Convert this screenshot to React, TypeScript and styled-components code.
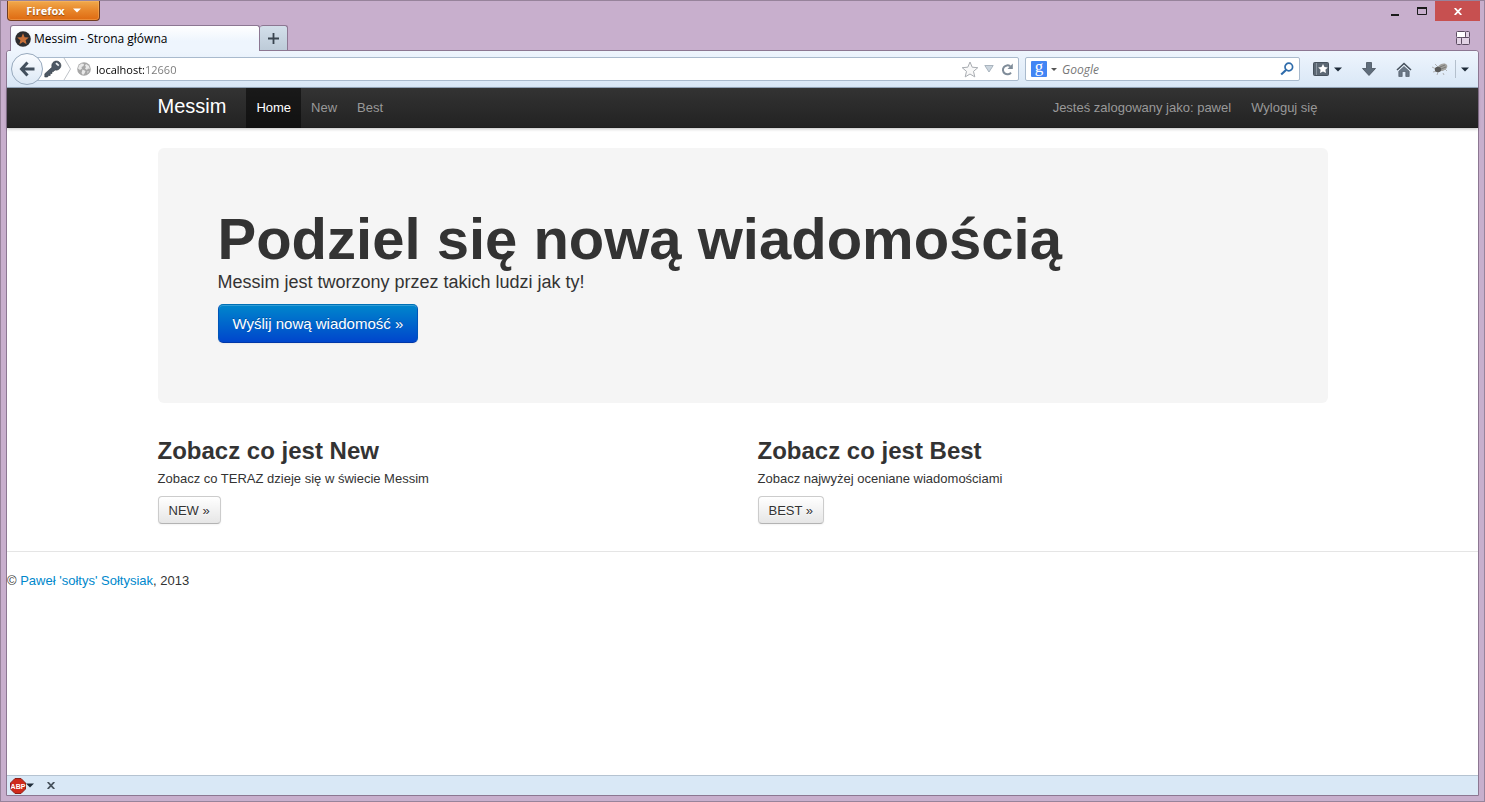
import React from "react";
import styled, { createGlobalStyle, css } from "styled-components";

const GlobalStyle = createGlobalStyle`
  *, *::before, *::after { box-sizing: border-box; }
  body { margin: 0; background: #c8afcd; }
  button, input { font: inherit; }
  button { cursor: pointer; }
`;

/* ---------- window frame ---------- */

const BrowserWindow = styled.div`
  display: flex;
  flex-direction: column;
  min-height: 100vh;
  padding: 0 5px 5px 6px;
  border: 1px solid #97839b;
  background: #c8afcd;
  font: 12px/16px "Open Sans", "Noto Sans", sans-serif;
  color: #000;
`;

const TitleBar = styled.div`
  display: flex;
  justify-content: space-between;
  align-items: flex-start;
  height: 24px;
`;

const PlainButton = styled.button<{ $w?: number }>`
  display: flex;
  align-items: center;
  justify-content: center;
  flex: none;
  width: ${(p) => (p.$w ? `${p.$w}px` : "auto")};
  padding: 0;
  border: 0;
  background: none;
  color: #1e2b38;
`;

const FirefoxButton = styled(PlainButton)`
  gap: 8px;
  width: 93px;
  height: 20px;
  border: 1px solid #6e3d22;
  border-top: 0;
  border-radius: 0 0 4px 4px;
  background: linear-gradient(#f0a94c, #e8862a 50%, #de6a12);
  box-shadow: inset 0 0 0 1px rgba(255, 190, 110, 0.4);
  color: #fff;
  font-size: 11px;
  font-weight: 700;
  text-shadow: 0 1px 1px rgba(90, 40, 0, 0.6);
`;

const WindowControls = styled.div`
  display: flex;
  margin-right: -1px;
`;

const WindowControl = styled(PlainButton)<{ $close?: boolean }>`
  height: 20px;
  ${(p) => p.$close && css`background: #c75050;`}
`;

const TabStrip = styled.div`
  display: flex;
  align-items: flex-end;
  height: 25px;
  padding: 0 7px 0 3px;
`;

const Tab = styled.div`
  position: relative;
  z-index: 1;
  display: flex;
  align-items: center;
  gap: 3px;
  width: 250px;
  height: 26px;
  margin-bottom: -1px;
  padding: 0 4px;
  border: 1px solid #8c7792;
  border-bottom: 0;
  border-radius: 3px 3px 0 0;
  background: linear-gradient(#fff, #eef5fd 60%);
`;

const NewTab = styled(PlainButton)`
  height: 25px;
  border: 1px solid #8c7792;
  border-left: 0;
  border-bottom: 0;
  border-radius: 3px 3px 0 0;
  background: linear-gradient(#d3dfea, #bdcbd8);
`;

const TabGroups = styled(PlainButton)`
  height: 24px;
  margin-left: auto;
`;

const Frame = styled.div`
  display: flex;
  flex: 1;
  flex-direction: column;
  margin-left: -1px;
  border: 1px solid #8c7792;
  border-radius: 3px 3px 0 0;
  background: #fff;
`;

/* ---------- navigation toolbar ---------- */

const Toolbar = styled.div`
  display: flex;
  align-items: center;
  height: 37px;
  padding: 0 4px;
  border-bottom: 1px solid #97a9bd;
  border-radius: 3px 3px 0 0;
  background: linear-gradient(#eef5fd, #d9e7f6);
`;

const BackButton = styled(PlainButton)`
  position: relative;
  z-index: 1;
  height: 32px;
  border: 1px solid #97a9bd;
  border-radius: 50%;
  background: linear-gradient(#fafcff, #dce8f5);
`;

const Field = styled.div`
  display: flex;
  align-items: center;
  height: 24px;
  border: 1px solid #a9bacd;
  border-radius: 2px;
  background: #fff;
`;

const AddressField = styled(Field)`
  flex: 1;
  margin-left: -16px;
  padding: 0 2px 0 15px;
`;

const SearchField = styled(Field)`
  width: 275px;
  margin: 0 10px 0 6px;
  padding: 0 3px 0 4px;
`;

const TextInput = styled.input`
  flex: 1;
  min-width: 0;
  height: 22px;
  padding: 0;
  border: 0;
  outline: 0;
  background: none;
`;

const AddressInput = styled(TextInput)`
  background: linear-gradient(90deg, #000 48px, #777 48px);
  background-clip: text;
  font-size: 11px;
  -webkit-text-fill-color: transparent;
`;

const SearchInput = styled(TextInput)`
  margin-left: 4px;
  &::placeholder {
    color: #777;
    font-style: italic;
    opacity: 1;
  }
`;

const ExtensionButton = styled(PlainButton)`
  padding-left: 10px;
`;

const Separator = styled.span`
  width: 1px;
  height: 18px;
  background: #b4c0cd;
`;

/* ---------- page ---------- */

const Page = styled.div`
  flex: 1;
  font: 13px/18px "Liberation Sans", Arial, sans-serif;
  color: #333;
`;

const Container = styled.div`
  width: 100%;
  max-width: 1170px;
  margin: 0 auto;
`;

const NavBar = styled.header`
  height: 40px;
  background: linear-gradient(#333, #222);
  box-shadow: 0 1px 3px rgba(0, 0, 0, 0.25), inset 0 -1px 0 rgba(0, 0, 0, 0.1);
`;

const NavInner = styled(Container)`
  display: flex;
`;

const Brand = styled.a`
  padding: 8px 20px 12px 0;
  font-size: 20px;
  line-height: 20px;
  color: #fff;
  text-decoration: none;
`;

const NavLinks = styled.nav<{ $right?: boolean }>`
  display: flex;
  ${(p) => p.$right && css`margin-left: auto;`}
`;

const NavLink = styled.a<{ $active?: boolean }>`
  height: 40px;
  padding: 10px 10px 11px;
  line-height: 19px;
  color: ${(p) => (p.$active ? "#fff" : "#999")};
  background: ${(p) => (p.$active ? "rgba(0, 0, 0, 0.5)" : "none")};
  text-decoration: none;
`;

const Hero = styled.section`
  margin: 20px 0 30px;
  padding: 60px;
  border-radius: 6px;
  background: #f5f5f5;
`;

const HeroTitle = styled.h1`
  margin: 0;
  font-size: 58px;
  line-height: 62px;
`;

const HeroText = styled.p`
  margin: 0 0 9px;
  font-size: 18px;
  line-height: 25px;
`;

const Button = styled.button<{ $primary?: boolean }>`
  display: block;
  padding: 5px 10px 3px;
  border: 1px solid #ccc;
  border-bottom-color: #b3b3b3;
  border-radius: 4px;
  background: linear-gradient(#fff, #e6e6e6);
  box-shadow: inset 0 1px 0 rgba(255, 255, 255, 0.2), 0 1px 2px rgba(0, 0, 0, 0.05);
  color: #333;
  line-height: 18px;
  text-shadow: 0 1px 1px rgba(255, 255, 255, 0.75);
  ${(p) =>
    p.$primary &&
    css`
      padding: 9px 14px;
      border-color: #0070b5 #0055b8 #0037a8;
      border-radius: 5px;
      background: linear-gradient(#08c, #04c) border-box;
      color: #fff;
      font-size: 15px;
      line-height: 19px;
      text-shadow: 0 -1px 0 rgba(0, 0, 0, 0.25);
    `}
`;

const Features = styled.div`
  display: grid;
  grid-template-columns: 1fr 1fr;
  gap: 30px;
`;

const FeatureTitle = styled.h2`
  margin: 0;
  font-size: 24px;
  line-height: 36px;
`;

const FeatureText = styled.p`
  margin: 0 0 7px;
  line-height: 20px;
`;

const Rule = styled.hr`
  margin: 27px 0 18px;
  border: 0;
  border-top: 1px solid #e5e5e5;
`;

const Footer = styled.footer`
  padding-bottom: 9px;
  line-height: 22px;
`;

const FooterLink = styled.a`
  color: #08c;
  text-decoration: none;
`;

const AddonBar = styled.div`
  display: flex;
  align-items: center;
  height: 20px;
  padding: 0 2px;
  border-top: 1px solid #b5c3d1;
  background: #d9e8f6;
`;

/* ---------- icons ---------- */

const Caret = ({ fill = "#1e2b38", size = 8 }: { fill?: string; size?: number }) => (
  <svg width={size} height="5" viewBox="0 0 8 5" aria-hidden="true">
    <path d="M0 .5h8L4 4.5z" fill={fill} />
  </svg>
);

const StarFavicon = () => (
  <svg width="16" height="16" viewBox="0 0 16 16" aria-hidden="true">
    <circle cx="8" cy="8" r="7.8" fill="#2d2d2f" />
    <path d="M8 2.3l1.6 3.9 4.2.3-3.2 2.7 1 4.1L8 11.1l-3.6 2.2 1-4.1-3.2-2.7 4.2-.3z" fill="#c8713a" />
  </svg>
);

const PlusIcon = () => (
  <svg width="11" height="11" viewBox="0 0 11 11" aria-hidden="true">
    <path d="M5.5 0v11M0 5.5h11" stroke="#39444f" strokeWidth="1.8" />
  </svg>
);

const GroupsIcon = () => (
  <svg width="14" height="14" viewBox="0 0 14 14" stroke="#5b4b60" aria-hidden="true">
    <rect x=".5" y=".5" width="9" height="6" rx="1" fill="#fff" />
    <rect x="9.5" y=".5" width="4" height="6" rx="1" fill="#e2d3e5" />
    <rect x=".5" y="6.5" width="5" height="7" rx="1" fill="#e2d3e5" />
    <rect x="5.5" y="6.5" width="8" height="7" rx="1" fill="#e2d3e5" />
  </svg>
);

const BackIcon = () => (
  <svg width="16" height="16" viewBox="0 0 16 16" fill="none" stroke="#424f5d" strokeWidth="3" aria-hidden="true">
    <path d="M8.5 1.5L2.5 8l6 6.5M3 8h12.5" />
  </svg>
);

const KeyIcon = () => (
  <svg width="18" height="18" viewBox="0 0 18 18" aria-hidden="true">
    <path
      d="M9 2.5C10.5.8 13.4.5 15.3 2c2 1.8 2.2 4.7.4 6.6-1.2 1.4-3 1.8-4.700 1.400L9.500 11.500H8v2H6.200v2H4.500L3.500 17H.8v-3.200L8 7.200C7.500 5.500 7.900 3.800 9 2.500z"
      fill="#4d5864"
      stroke="#343c45"
      strokeWidth=".6"
    />
    <path d="M12 3.200l2.800 2.500" stroke="#eef1f4" strokeWidth="1.8" />
  </svg>
);

const ChevronEdge = () => (
  <svg width="9" height="22" viewBox="0 0 9 22" fill="none" aria-hidden="true">
    <path d="M1 0l6.500 11L1 22" stroke="#bfc3c8" />
  </svg>
);

const GlobeIcon = () => (
  <svg width="14" height="14" viewBox="0 0 14 14" aria-hidden="true">
    <circle cx="7" cy="7" r="6.8" fill="#a6a6a6" />
    <path
      d="M2 3.500l2.500-2 2.500.500-.500 2-2 1 .500 1.500-2 1.500L1 6.500zM9 2l3 2 .800 3-1.800-.500-1 1.500-2-1.500L9 5 8 3.500zM5.500 7.500l3 1.500-1 2.500-1.500 1.500-1.500-2zM10.500 9l1.300.500-1.300 2z"
      fill="#e9e9e9"
    />
  </svg>
);

const StarIcon = () => (
  <svg width="18" height="17" viewBox="0 0 18 17" aria-hidden="true">
    <path
      d="M9 1l2.200 5.200 5.600.5-4.300 3.700 1.300 5.500L9 13l-4.800 2.900 1.300-5.500L1.200 6.700l5.600-.5z"
      fill="#f8f8f8"
      stroke="#a9adb2"
    />
  </svg>
);

const HistoryIcon = () => (
  <svg width="10" height="8" viewBox="0 0 10 8" aria-hidden="true">
    <path d="M.8.5h8.400L5 7z" fill="#cbd5de" stroke="#a9b4be" />
  </svg>
);

const ReloadIcon = () => (
  <svg width="13" height="13" viewBox="0 0 13 13" aria-hidden="true">
    <path d="M10 9.600A4.500 4.500 0 1 1 9.200 3.300" fill="none" stroke="#7f8c99" strokeWidth="2" />
    <path d="M11.800.5v5.500H6.500z" fill="#7f8c99" />
  </svg>
);

const GoogleIcon = () => (
  <svg width="16" height="16" viewBox="0 0 16 16" overflow="visible" aria-hidden="true">
    <rect width="16" height="16" rx="1" fill="#4285f4" />
    <text x="8" y="11" fill="#fff" fontSize="17" fontFamily="Liberation Serif, serif" textAnchor="middle">
      g
    </text>
  </svg>
);

const SearchIcon = () => (
  <svg width="14" height="14" viewBox="0 0 14 14" fill="none" stroke="#2f6cab" aria-hidden="true">
    <circle cx="8.8" cy="5" r="3.8" strokeWidth="1.7" />
    <path d="M6 8L1.200 12.500" strokeWidth="2.2" />
  </svg>
);

const BookmarkIcon = () => (
  <svg width="16" height="14" viewBox="0 0 16 14" aria-hidden="true">
    <rect x=".5" y=".5" width="15" height="13" rx="1" fill="#5c6874" stroke="#46515c" />
    <path d="M3.500 1v12" stroke="#8b96a1" />
    <path d="M10 2l1.500 3 3.300.4-2.400 2.300.6 3.300-3-1.600L7 11l.6-3.300L5.200 5.400 8.500 5z" fill="#fff" />
  </svg>
);

const DownloadIcon = () => (
  <svg width="14" height="14" viewBox="0 0 14 14" aria-hidden="true">
    <path d="M4.500.5h5v6h4L7 13.500.5 6.500h4z" fill="#5f6d7b" stroke="#46515c" strokeWidth=".8" />
  </svg>
);

const HomeIcon = () => (
  <svg width="16" height="15" viewBox="0 0 16 15" aria-hidden="true">
    <path d="M1 8l7-6.500L15 8" fill="none" stroke="#46515c" strokeWidth="1.6" />
    <path d="M2.800 9.200L8 4.500l5.200 4.700v5.300H9.800v-5H6.200v5H2.800z" fill="#6b7886" stroke="#46515c" strokeWidth=".6" />
  </svg>
);

const BugIcon = () => (
  <svg width="18" height="14" viewBox="0 0 18 14" aria-hidden="true">
    <path d="M1 5l4 2M2 10l4-1M6 13l1-3M4 2l3 3M12 11l1 2M14 7l2 2" stroke="#a3a3a3" strokeWidth=".8" />
    <ellipse cx="11.500" cy="5.200" rx="5" ry="3.500" transform="rotate(-22 11.500 5.200)" fill="#a3a29f" />
    <ellipse cx="7" cy="7.500" rx="3.200" ry="2.800" fill="#5a5a58" />
    <path d="M9 5l5-2M10 7l5-2" stroke="#6f6e6b" strokeWidth=".8" />
  </svg>
);

const AbpIcon = () => (
  <svg width="16" height="16" viewBox="0 0 16 16" aria-hidden="true">
    <path d="M5 .5h6L15.500 5v6L11 15.500H5L.5 11V5z" fill="#cf2a1c" stroke="#8d2018" />
    <text x="8" y="11" fill="#fff" fontSize="7" fontWeight="700" fontFamily="Liberation Sans, sans-serif" textAnchor="middle">
      ABP
    </text>
  </svg>
);

const MinimizeIcon = () => (
  <svg width="8" height="12" viewBox="0 0 8 12" aria-hidden="true">
    <path d="M0 10h8" stroke="#1b1b1b" strokeWidth="2" />
  </svg>
);

const MaximizeIcon = () => (
  <svg width="10" height="8" viewBox="0 0 10 8" aria-hidden="true">
    <path d="M.5 1v6.500h9V1" fill="none" stroke="#1b1b1b" />
    <path d="M0 1h10" stroke="#1b1b1b" strokeWidth="2" />
  </svg>
);

const CrossIcon = ({ color }: { color: string }) => (
  <svg width="8" height="7" viewBox="0 0 8 7" aria-hidden="true">
    <path d="M.7 0l6.600 7M7.300 0L.7 7" stroke={color} strokeWidth="1.8" />
  </svg>
);

/* ---------- composition ---------- */

const features = [
  { title: "Zobacz co jest New", text: "Zobacz co TERAZ dzieje się w świecie Messim", action: "NEW »" },
  { title: "Zobacz co jest Best", text: "Zobacz najwyżej oceniane wiadomościami", action: "BEST »" },
];

export default function App() {
  return (
    <>
      <GlobalStyle />
      <BrowserWindow>
        <TitleBar>
          <FirefoxButton>
            Firefox
            <Caret fill="#fff" />
          </FirefoxButton>
          <WindowControls>
            <WindowControl $w={26} aria-label="Minimize"><MinimizeIcon /></WindowControl>
            <WindowControl $w={27} aria-label="Maximize"><MaximizeIcon /></WindowControl>
            <WindowControl $w={45} $close aria-label="Close"><CrossIcon color="#fff" /></WindowControl>
          </WindowControls>
        </TitleBar>
        <TabStrip>
          <Tab>
            <StarFavicon />
            Messim - Strona główna
          </Tab>
          <NewTab $w={28} aria-label="New tab"><PlusIcon /></NewTab>
          <TabGroups $w={18} aria-label="Tab groups"><GroupsIcon /></TabGroups>
        </TabStrip>
        <Frame>
          <Toolbar>
            <BackButton $w={32} aria-label="Back"><BackIcon /></BackButton>
            <AddressField>
              <PlainButton $w={20} aria-label="Site identity"><KeyIcon /></PlainButton>
              <ChevronEdge />
              <PlainButton $w={24} aria-label="Site information"><GlobeIcon /></PlainButton>
              <AddressInput aria-label="Address" defaultValue="localhost:12660" />
              <PlainButton $w={20} aria-label="Bookmark this page"><StarIcon /></PlainButton>
              <PlainButton $w={18} aria-label="History"><HistoryIcon /></PlainButton>
              <PlainButton $w={18} aria-label="Reload"><ReloadIcon /></PlainButton>
            </AddressField>
            <SearchField>
              <PlainButton $w={28} aria-label="Search engine">
                <GoogleIcon />
                &nbsp;
                <Caret fill="#555" size={6} />
              </PlainButton>
              <SearchInput aria-label="Search" placeholder="Google" />
              <PlainButton $w={18} aria-label="Search"><SearchIcon /></PlainButton>
            </SearchField>
            <PlainButton $w={22} aria-label="Bookmarks"><BookmarkIcon /></PlainButton>
            <PlainButton $w={12} aria-label="Bookmarks menu"><Caret /></PlainButton>
            <PlainButton $w={49} aria-label="Downloads"><DownloadIcon /></PlainButton>
            <PlainButton $w={22} aria-label="Home"><HomeIcon /></PlainButton>
            <ExtensionButton $w={40} aria-label="Firebug"><BugIcon /></ExtensionButton>
            <Separator />
            <PlainButton $w={18} aria-label="Firebug menu"><Caret /></PlainButton>
          </Toolbar>
          <Page>
            <NavBar>
              <NavInner>
                <Brand href="#">Messim</Brand>
                <NavLinks>
                  <NavLink href="#" $active>Home</NavLink>
                  <NavLink href="#new">New</NavLink>
                  <NavLink href="#best">Best</NavLink>
                </NavLinks>
                <NavLinks $right>
                  <NavLink href="#account">Jesteś zalogowany jako: pawel</NavLink>
                  <NavLink href="#logout">Wyloguj się</NavLink>
                </NavLinks>
              </NavInner>
            </NavBar>
            <Container as="main">
              <Hero>
                <HeroTitle>Podziel się nową wiadomością</HeroTitle>
                <HeroText>Messim jest tworzony przez takich ludzi jak ty!</HeroText>
                <Button $primary>Wyślij nową wiadomość »</Button>
              </Hero>
              <Features>
                {features.map((f) => (
                  <section key={f.title}>
                    <FeatureTitle>{f.title}</FeatureTitle>
                    <FeatureText>{f.text}</FeatureText>
                    <Button>{f.action}</Button>
                  </section>
                ))}
              </Features>
            </Container>
            <Rule />
            <Footer>
              © <FooterLink href="#author">Paweł 'sołtys' Sołtysiak</FooterLink>, 2013
            </Footer>
          </Page>
          <AddonBar>
            <PlainButton $w={26} aria-label="Adblock Plus"><AbpIcon /><Caret /></PlainButton>
            <PlainButton $w={32} aria-label="Close add-on bar"><CrossIcon color="#46515c" /></PlainButton>
          </AddonBar>
        </Frame>
      </BrowserWindow>
    </>
  );
}
